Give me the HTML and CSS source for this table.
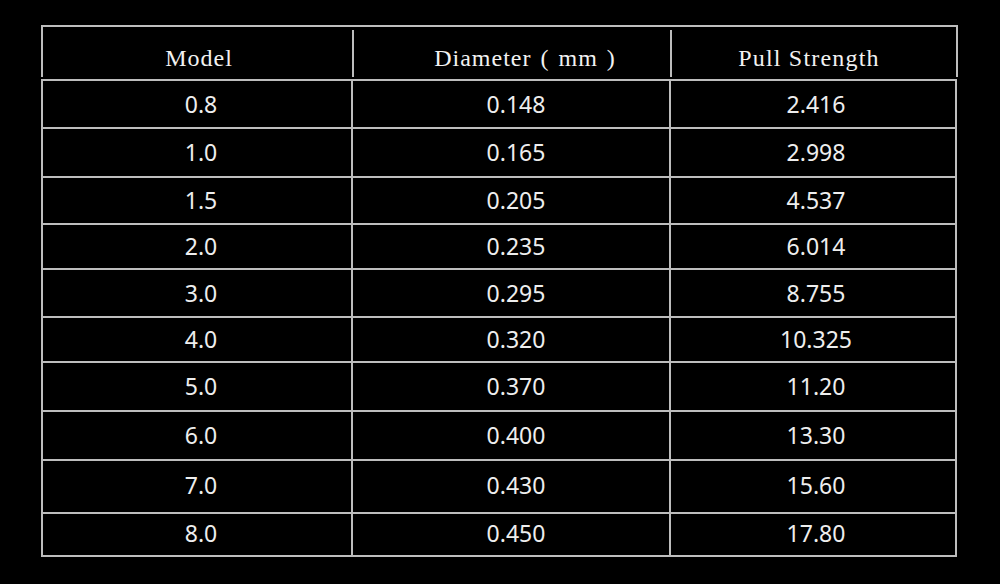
FILE: index.html
```html
<!DOCTYPE html>
<html lang="en">
<head>
<meta charset="utf-8">
<title>Spec table</title>
<link rel="stylesheet" href="styles.css">
</head>
<body>
<div class="page">
  <div class="head">
    <div class="hcell c1">Model</div>
    <div class="hcell c2">Diameter ( mm )</div>
    <div class="hcell c3">Pull Strength</div>
  </div>
  <div class="grid">
    <div class="cell">0.8</div><div class="cell">0.148</div><div class="cell">2.416</div>
    <div class="cell">1.0</div><div class="cell">0.165</div><div class="cell">2.998</div>
    <div class="cell">1.5</div><div class="cell">0.205</div><div class="cell">4.537</div>
    <div class="cell">2.0</div><div class="cell">0.235</div><div class="cell">6.014</div>
    <div class="cell">3.0</div><div class="cell">0.295</div><div class="cell">8.755</div>
    <div class="cell">4.0</div><div class="cell">0.320</div><div class="cell">10.325</div>
    <div class="cell">5.0</div><div class="cell">0.370</div><div class="cell">11.20</div>
    <div class="cell">6.0</div><div class="cell">0.400</div><div class="cell">13.30</div>
    <div class="cell">7.0</div><div class="cell">0.430</div><div class="cell">15.60</div>
    <div class="cell">8.0</div><div class="cell">0.450</div><div class="cell">17.80</div>
  </div>
</div>
</body>
</html>
```
FILE: styles.css
```css
html, body {
  margin: 0;
  padding: 0;
  background: #000;
  width: 1000px;
  height: 584px;
  overflow: hidden;
}

.page {
  padding: 25px 0 0 41px;
}

.head {
  width: 913px;
  height: 50px;
  border: 2px solid #bdbdbd;
  border-bottom: none;
  display: grid;
  grid-template-columns: 309px 318px 286px;
}

.hcell {
  font-family: "Liberation Serif", "Times New Roman", serif;
  font-size: 24px;
  letter-spacing: 1px;
  line-height: 24px;
  color: #f2f2f2;
  text-align: center;
  padding-top: 19px;
}

.c1 {
  padding-left: 3px;
}

.c2, .c3 {
  border-left: 2px solid #bdbdbd;
  margin-top: 3px;
  padding-top: 16px;
}

.c2 {
  padding-left: 26px;
  word-spacing: 2px;
}

.c3 {
  padding-right: 10px;
  letter-spacing: 1.2px;
}

.grid {
  margin-top: 2px;
  width: 916px;
  display: grid;
  grid-template-columns: 308px 316px 284px;
  grid-template-rows: 46px 47px 45px 43px 46px 43px 47px 47px 51px 41px;
  gap: 2px;
  padding: 2px;
  box-sizing: border-box;
  background: #bdbdbd;
}

.cell {
  background: #000;
  color: #eeeeee;
  font-family: "Noto Sans", "Open Sans", sans-serif;
  font-size: 23px;
  display: flex;
  align-items: center;
  justify-content: center;
  line-height: 1;
}

.cell:nth-child(3n+1) {
  padding-left: 8px;
}

.cell:nth-child(3n+2) {
  padding-left: 10px;
}

.cell:nth-child(3n) {
  padding-left: 6px;
}

.cell:nth-child(n+25) {
  padding-bottom: 3px;
}
```
